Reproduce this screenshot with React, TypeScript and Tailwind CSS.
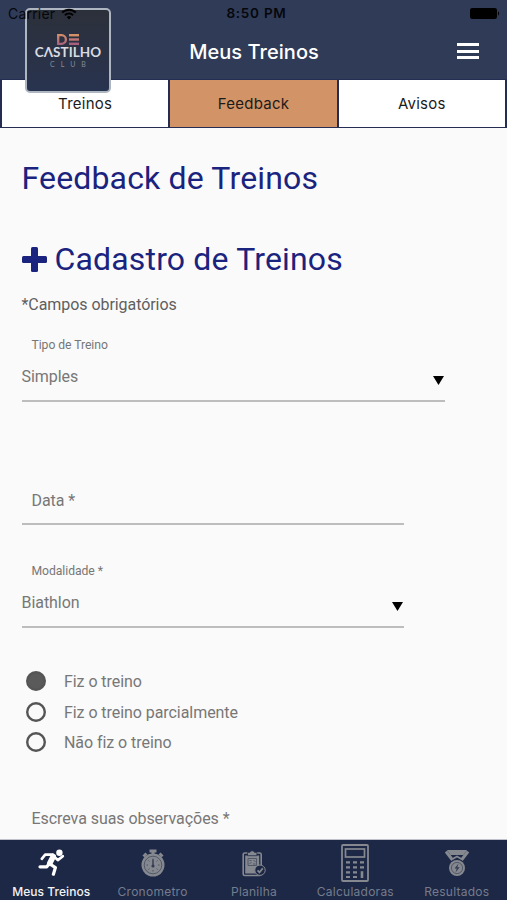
import type { ReactNode } from "react";

const tabs = [
  { label: "Treinos", active: false },
  { label: "Feedback", active: true },
  { label: "Avisos", active: false },
];

const statusOptions = [
  { label: "Fiz o treino", checked: true },
  { label: "Fiz o treino parcialmente", checked: false },
  { label: "Não fiz o treino", checked: false },
];

function WifiIcon() {
  return (
    <svg width="16" height="12" viewBox="0 0 16 12" fill="none" stroke="#000">
      <path d="M1.2 4.6a9.6 9.6 0 0 1 13.6 0" strokeWidth="2" />
      <path d="M3.9 7.3a5.8 5.8 0 0 1 8.2 0" strokeWidth="2" />
      <path d="M8 11.4 5.8 9.2a3.1 3.1 0 0 1 4.4 0z" fill="#000" stroke="none" />
    </svg>
  );
}

function BatteryIcon() {
  return (
    <svg width="30" height="12" viewBox="0 0 30 12" fill="#000">
      <rect x="0" y="0" width="27" height="11" rx="2.2" />
      <path d="M28 3.5c1.5.4 1.5 3.6 0 4z" />
    </svg>
  );
}

function Logo() {
  return (
    <div className="flex h-[85px] w-[86px] flex-col items-center rounded-[5px] border-2 border-[#aeb6c2] bg-linear-to-b from-[#2c303a] to-[#28334f] pt-[24px]">
      <svg width="22" height="11" viewBox="0 0 22 11" fill="none">
        <defs>
          <linearGradient id="logo" x1="0" y1="0" x2="0" y2="11" gradientUnits="userSpaceOnUse">
            <stop stopColor="#d69068" />
            <stop offset="1" stopColor="#a9607f" />
          </linearGradient>
        </defs>
        <path d="M1.2 1.2h3.4a4.3 4.3 0 0 1 0 8.6H1.2z" stroke="url(#logo)" strokeWidth="2.3" />
        <rect x="12" y="0" width="10" height="2.4" fill="#d69068" />
        <rect x="12" y="4.3" width="10" height="2.4" fill="#c27876" />
        <rect x="12" y="8.6" width="10" height="2.4" fill="#a9607f" />
      </svg>
      <div className="flex h-[15px] items-center font-['Lato'] text-[13.5px] font-bold tracking-[0.05px] text-[#d9dbe1]">
        CΛSTILHO
      </div>
      <div className="flex h-[9px] items-center pl-[6px] font-['Lato'] text-[7px] tracking-[6px] text-[#858c9a]">
        CLUB
      </div>
    </div>
  );
}

function RunnerIcon() {
  return (
    <svg
      width="27"
      height="27"
      viewBox="0 0 27 27"
      fill="none"
      stroke="#fff"
      strokeLinecap="round"
      strokeLinejoin="round"
    >
      <circle cx="21.4" cy="3.8" r="3.2" fill="#fff" stroke="none" />
      <path d="M14.6 5.6H7.2L3.8 9.8" strokeWidth="2.7" />
      <path d="m15.2 7.5-3.4 6.8" strokeWidth="5.6" />
      <path d="m17 8.6 2.8 2.5 5-3.9" strokeWidth="2.7" />
      <path d="m11.4 14.6-2.6 3.2H2" strokeWidth="3.2" />
      <path d="m12 15 5.4 3.6-2 6.6" strokeWidth="3.2" />
    </svg>
  );
}

function StopwatchIcon() {
  return (
    <svg width="26" height="28" viewBox="0 0 26 28" fill="none" stroke="#85888f">
      <path d="M9.5 2h7M13 3v3M3.5 7.5l3-3M22.5 7.5l-3-3" strokeWidth="3" />
      <circle cx="13" cy="16" r="11.5" fill="#85888f" stroke="none" />
      <circle cx="13" cy="16" r="8.8" stroke="#4b5263" strokeWidth="0.9" />
      <path
        d="M13 9.5v1.5M13 21v1.5M6.5 16H8M18 16h1.5M8.4 11.4l1 1M17.6 11.4l-1 1M8.4 20.6l1-1M17.6 20.6l-1-1"
        stroke="#4b5263"
      />
      <path d="M13 10.5v6.5" stroke="#333c54" strokeWidth="1.4" />
      <circle cx="13" cy="17" r="1.6" fill="#333c54" stroke="none" />
    </svg>
  );
}

function ClipboardIcon() {
  return (
    <svg width="24" height="28" viewBox="0 0 24 28" fill="none">
      <rect x="1.2" y="4" width="18" height="22.5" rx="1.5" stroke="#85888f" strokeWidth="1.6" />
      <rect x="3.2" y="6.5" width="14" height="18" fill="#85888f" />
      <path d="M5.5 3.5h2.3a2.5 2.5 0 0 1 4.8 0h2.3v3.2H5.5z" fill="#85888f" stroke="#1d2846" strokeWidth="0.7" />
      <path d="M6 9.5h8.5v7H6zM7.5 11.5h2M11.5 11l2 2M7.5 15l2-2M11 15h2.5" stroke="#4b5263" strokeWidth="0.9" />
      <circle cx="18" cy="21.2" r="5.2" fill="#1d2846" stroke="#85888f" strokeWidth="1" />
      <path d="m15.5 21.3 2 2 3.3-4" stroke="#85888f" strokeWidth="1.8" />
    </svg>
  );
}

function CalculatorIcon() {
  return (
    <svg width="28" height="38" viewBox="0 0 28 38" fill="none" stroke="#85888f">
      <rect x="1" y="1" width="26" height="36" rx="1" strokeWidth="1.8" />
      <rect x="4.5" y="5" width="19" height="8" strokeWidth="1.7" />
      <path
        d="M5 18.3h4M12 18.3h4M19 18.3h4M5 23.3h4M12 23.3h4M19 23.3h4M5 28.3h4M12 28.3h4M5 33h4M12 33h4"
        strokeWidth="2.2"
      />
      <path d="M21 27.2v6.8" strokeWidth="2.6" />
    </svg>
  );
}

function MedalIcon() {
  return (
    <svg width="26" height="28" viewBox="0 0 26 28" fill="none">
      <path d="M3 1h20l-3.5 5h-13z" fill="#85888f" />
      <path d="M2 2.5l6.5 8.5M24 2.5 17.5 11" stroke="#85888f" strokeWidth="3" />
      <path d="M8.5 10 13 7.5l4.5 2.5" stroke="#85888f" strokeWidth="1.8" />
      <circle cx="13" cy="19" r="8" fill="#85888f" />
      <circle cx="13" cy="19" r="5.6" stroke="#4b5263" strokeWidth="0.9" />
      <path d="m14.5 14.5-4 5h2.3l-1.3 4 4.2-5.2h-2.4z" fill="#333c54" />
    </svg>
  );
}

const navItems: { label: string; icon: ReactNode; active?: boolean }[] = [
  { label: "Meus Treinos", icon: <RunnerIcon />, active: true },
  { label: "Cronometro", icon: <StopwatchIcon /> },
  { label: "Planilha", icon: <ClipboardIcon /> },
  { label: "Calculadoras", icon: <CalculatorIcon /> },
  { label: "Resultados", icon: <MedalIcon /> },
];

function SelectField({ label, value, className }: { label: string; value: string; className: string }) {
  return (
    <div className={`flex flex-col ${className}`}>
      <div className="flex h-5 items-center pl-[10px] text-[12.2px]">{label}</div>
      <div className="mt-[10px] flex h-[37px] justify-between border-b-2 border-[#bdbdbd] pt-[2px]">
        <span className="flex h-5 items-center">{value}</span>
        <svg className="mt-[9px] mr-[1px]" width="11" height="9" viewBox="0 0 11 9">
          <path d="M0 0h11L5.5 9z" fill="#000" />
        </svg>
      </div>
    </div>
  );
}

export default function App() {
  return (
    <div className="flex h-[900px] w-[507px] flex-col overflow-hidden bg-[#fafafa] font-['Roboto',sans-serif] text-base tracking-[-0.06px] text-[#777]">
      <header className="relative h-[79px] shrink-0 bg-[#303b57] font-['Inter',sans-serif]">
        <div className="absolute top-[8px] left-[25px]">
          <Logo />
        </div>
        <div className="relative grid h-[27px] grid-cols-3 items-center pr-[7px] pl-[8px] text-[14px] text-[#05070c]">
          <div className="flex items-center gap-[6px]">
            <span className="tracking-[0.2px]">Carrier</span>
            <WifiIcon />
          </div>
          <span className="pl-[5px] text-center text-[13.5px] font-semibold tracking-[0.75px]">8:50 PM</span>
          <div className="flex justify-end">
            <BatteryIcon />
          </div>
        </div>
        <div className="grid h-[50px] grid-cols-[1fr_auto_1fr] items-center pr-[28px] pl-[29px]">
          <span />
          <h1 className="text-[20px] font-medium tracking-[0.05px] text-white">Meus Treinos</h1>
          <div className="flex flex-col gap-[3.5px] justify-self-end pb-[2px]">
            <span className="h-[3px] w-[22px] bg-white" />
            <span className="h-[3px] w-[22px] bg-white" />
            <span className="h-[3px] w-[22px] bg-white" />
          </div>
        </div>
      </header>

      <nav className="grid h-[49px] shrink-0 grid-cols-3 gap-[2px] border border-x-2 border-[#252e52] bg-[#252e52] font-['Inter',sans-serif] text-[15px] tracking-[0.25px] text-[#1b1b1b]">
        {tabs.map((tab) => (
          <button
            key={tab.label}
            className={`flex items-center justify-center pt-[2px] ${tab.active ? "bg-[#d29366]" : "bg-white"}`}
          >
            {tab.label}
          </button>
        ))}
      </nav>

      <main className="flex min-h-0 flex-1 flex-col overflow-hidden pt-[30px] pl-[21.5px]">
        <h2 className="flex h-10 items-center text-[32px] tracking-[0.16px] text-[#1a237e]">Feedback de Treinos</h2>
        <h2 className="mt-[41px] flex h-10 items-center gap-[8px] text-[32px] tracking-[0.16px] text-[#1a237e]">
          <svg className="mt-px" width="25" height="25" viewBox="0 0 25 25" fill="#1a237e">
            <rect x="0" y="9" width="25" height="7" rx="1.5" />
            <rect x="9" y="0" width="7" height="25" rx="1.5" />
          </svg>
          Cadastro de Treinos
        </h2>
        <p className="mt-[16px] flex h-5 items-center text-[#5f5f5f]">*Campos obrigatórios</p>

        <SelectField label="Tipo de Treino" value="Simples" className="mt-[20px] w-[423px]" />

        <div className="mt-[88px] flex h-[35px] w-[382px] border-b-2 border-[#bdbdbd] pl-[10px]">
          <span className="flex h-5 items-center pt-px">Data *</span>
        </div>

        <SelectField label="Modalidade *" value="Biathlon" className="mt-[36px] w-[382px]" />

        <div className="mt-[38px] flex flex-col pl-[4.5px]">
          {statusOptions.map((option) => (
            <label key={option.label} className="flex h-[30.5px] items-center gap-[18px]">
              <svg width="20" height="20" viewBox="0 0 20 20" stroke="#555" strokeWidth="2.4">
                <circle cx="10" cy="10" r="8.8" fill={option.checked ? "#5a5a5a" : "none"} />
              </svg>
              <span className="pt-[2px]">{option.label}</span>
            </label>
          ))}
        </div>

        <p className="mt-[51px] flex h-5 items-center pt-px pl-[10px]">Escreva suas observações *</p>
      </main>

      <footer className="grid h-[61px] shrink-0 grid-cols-5 border-t border-[#bfc2cb] bg-[#1d2846] font-['Inter',sans-serif] text-[12px]">
        {navItems.map((item) => (
          <div
            key={item.label}
            className={`flex flex-col items-center pl-px ${item.active ? "text-[#f2f3f5]" : "text-[#757c8c]"}`}
          >
            <div className="flex h-[45px] items-center">{item.icon}</div>
            <span
              className={`leading-[13px] whitespace-nowrap ${item.active ? "font-medium tracking-[0.05px]" : "tracking-[0.25px]"}`}
            >
              {item.label}
            </span>
          </div>
        ))}
      </footer>
    </div>
  );
}
